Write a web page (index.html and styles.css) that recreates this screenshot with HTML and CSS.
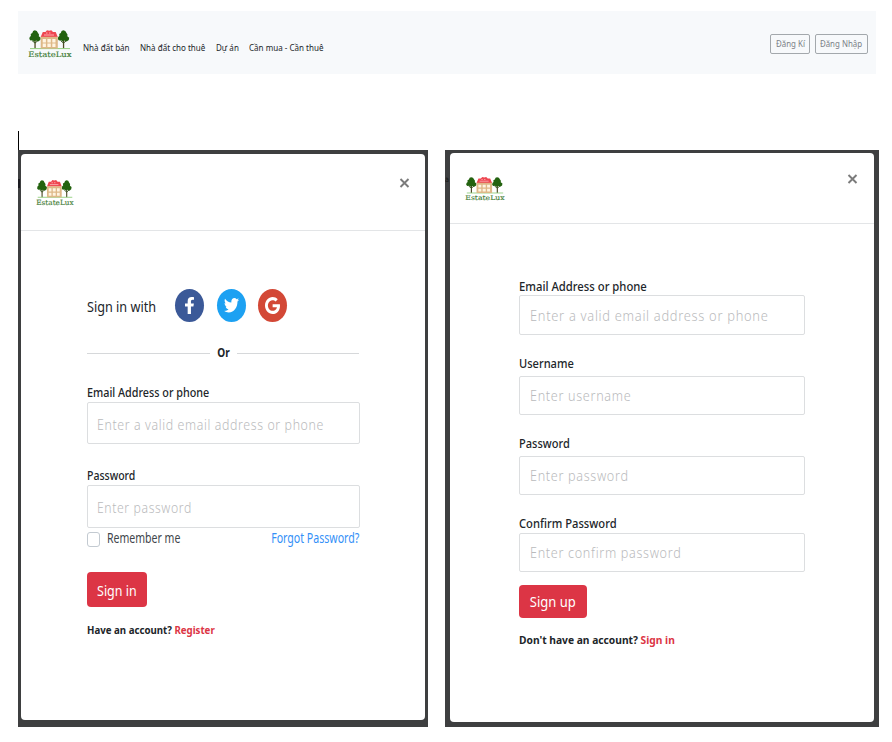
FILE: index.html
```
<!DOCTYPE html>
<html lang="vi">
<head>
<meta charset="utf-8">
<title>EstateLux</title>
<link rel="stylesheet" href="styles.css">
</head>
<body>
<svg width="0" height="0" class="defs" aria-hidden="true">
  <symbol id="tree" viewBox="0 0 12 19">
    <path d="M5.4 10h1.3v8.5H5.4z" fill="#4d4a24"/>
    <path d="M3 10.5l3 2.6 3-2.6" stroke="#33551f" stroke-width="1" fill="none"/>
    <path d="M5.8.3L7.8 1 9 3l1 1.4-.2 1.8 1.9 1.5-.4 2.4-2.1 1.4-2.3-.9-1.6.8-1.8-1.1-2 .2L.3 9.1l.4-2 1.2-1.2-.2-2 1.6-.8.8-2z" fill="#23620f"/>
  </symbol>
  <symbol id="logo" viewBox="0 0 44 30" preserveAspectRatio="none">
    <use href="#tree" x="1" y="1" width="12" height="19"/>
    <use href="#tree" x="29.5" y="1" width="12" height="19"/>
    <path d="M2 19.6h40" stroke="#91cf7e" stroke-width="1"/>
    <path d="M12.7 8l2.1-5h2.6l1.6-1.8 2.2.5 2.1-.5L25 3h2.7l2.1 5z" fill="#ee4650"/>
    <path d="M16 6h10M18 4h1.5m1.5 0h1.5" stroke="#ffc7c8" stroke-width=".8" fill="none"/>
    <path d="M12.7 7.8h17.1v11.8H12.7z" fill="#deb887"/>
    <path d="M14.7 10h3.2v3.4h-3.2zm4.7 0h3.4v3.4h-3.4zm4.9 0h3.2v3.4h-3.2zm-9.6 4.6h3.2V18h-3.2zm4.7 0h3.4V18h-3.4zm4.9 0h3.2V18h-3.2z" fill="#fff4e1"/>
    <text x=".3" y="28" textLength="43.2" lengthAdjust="spacingAndGlyphs" class="logo-text">EstateLux</text>
  </symbol>
</svg>

<header class="navbar">
  <svg class="logo"><use href="#logo"/></svg>
  <nav class="links">
    <a>Nhà đất bán</a><a>Nhà đất cho thuê</a><a>Dự án</a><a>Cần mua - Cần thuê</a>
  </nav>
  <div class="actions">
    <button class="outline reg"><span>Đăng Kí</span></button>
    <button class="outline log"><span>Đăng Nhập</span></button>
  </div>
</header>

<div class="caret"></div>

<main class="panels">
  <section class="backdrop signin">
    <div class="speck"></div>
    <div class="modal">
      <div class="modal-head">
        <svg class="logo"><use href="#logo"/></svg>
        <svg class="close" viewBox="0 0 10 10"><path d="M1 1l8 8M9 1L1 9"/></svg>
      </div>
      <form class="form">
        <div class="social">
          <span class="t lead">Sign in with</span>
          <span class="disc fb"><svg viewBox="22.9 0 274.3 512" preserveAspectRatio="none"><path d="M279.14 288l14.22-92.66h-88.91v-60.13c0-25.35 12.42-50.06 52.24-50.06h40.42V6.26S260.43 0 225.36 0c-73.22 0-121.08 44.38-121.08 124.72v70.62H22.89V288h81.39v224h100.17V288z"/></svg></span>
          <span class="disc tw"><svg viewBox="0 48 512 416" preserveAspectRatio="none"><path d="M459.37 151.716c.325 4.548.325 9.097.325 13.645 0 138.72-105.583 298.558-298.558 298.558-59.452 0-114.68-17.219-161.137-47.106 8.447.974 16.568 1.299 25.34 1.299 49.055 0 94.213-16.568 130.274-44.832-46.132-.975-84.792-31.188-98.112-72.772 6.498.974 12.995 1.624 19.818 1.624 9.421 0 18.843-1.3 27.614-3.573-48.081-9.747-84.143-51.98-84.143-102.985v-1.299c13.969 7.797 30.214 12.67 47.431 13.319-28.264-18.843-46.781-51.005-46.781-87.391 0-19.492 5.197-37.36 14.294-52.954 51.655 63.675 129.3 105.258 216.365 109.807-1.624-7.797-2.599-15.918-2.599-24.04 0-57.828 46.782-104.934 104.934-104.934 30.213 0 57.502 12.67 76.67 33.137 23.715-4.548 46.456-13.32 66.599-25.34-7.798 24.366-24.366 44.833-46.132 57.827 21.117-2.273 41.584-8.122 60.426-16.243-14.292 20.791-32.161 39.308-52.628 54.253z"/></svg></span>
          <span class="disc gg"><svg viewBox="0 8 488 496" preserveAspectRatio="none"><path d="M488 261.8C488 403.3 391.1 504 248 504 110.8 504 0 393.2 0 256S110.8 8 248 8c66.8 0 123 24.5 166.3 64.9l-67.5 64.9C258.5 52.6 94.3 116.6 94.3 256c0 86.5 69.1 156.6 153.7 156.6 98.2 0 135-70.4 140.8-106.9H248v-85.3h236.1c2.3 12.7 3.9 24.9 3.9 41.4z"/></svg></span>
        </div>
        <div class="divider"><span>Or</span></div>
        <label class="t label">Email Address or phone</label>
        <div class="input"><span class="t">Enter a valid email address or phone</span></div>
        <label class="t label second">Password</label>
        <div class="input"><span class="t">Enter password</span></div>
        <div class="options">
          <span class="box"></span><span class="t remember">Remember me</span><a class="t forgot">Forgot Password?</a>
        </div>
        <button type="button" class="submit"><span>Sign in</span></button>
        <p class="t foot">Have an account? <a>Register</a></p>
      </form>
    </div>
  </section>

  <section class="backdrop signup">
    <div class="speck">à</div>
    <div class="modal">
      <div class="modal-head">
        <svg class="logo"><use href="#logo"/></svg>
        <svg class="close" viewBox="0 0 10 10"><path d="M1 1l8 8M9 1L1 9"/></svg>
      </div>
      <form class="form">
        <label class="t label">Email Address or phone</label>
        <div class="input"><span class="t">Enter a valid email address or phone</span></div>
        <label class="t label user">Username</label>
        <div class="input"><span class="t">Enter username</span></div>
        <label class="t label pass">Password</label>
        <div class="input"><span class="t">Enter password</span></div>
        <label class="t label confirm">Confirm Password</label>
        <div class="input"><span class="t">Enter confirm password</span></div>
        <button type="button" class="submit"><span>Sign up</span></button>
        <p class="t foot">Don't have an account? <a>Sign in</a></p>
      </form>
    </div>
  </section>
</main>
</body>
</html>
```
FILE: styles.css
```
* { box-sizing: border-box; }
body {
  margin: 0;
  padding: 11px 0 0 18px;
  width: 892px;
  height: 742px;
  overflow: hidden;
  background: #fff;
  color: #212529;
  font-family: "Noto Sans", "Open Sans", sans-serif;
}
svg { display: block; flex: none; overflow: visible; }
symbol { overflow: visible; }
.defs { position: absolute; }
button { font-family: inherit; padding: 0; margin: 0; }
p { margin: 0; }
.logo-text { font: 400 7.6px "DejaVu Serif", serif; fill: #3f7d36; stroke: #3f7d36; stroke-width: .15; }

.navbar {
  width: 858px;
  height: 63px;
  padding: 18px 8px 0 10px;
  display: flex;
  align-items: flex-start;
  background: #f7f9fb;
}
.navbar .logo { width: 44px; height: 30px; }
.links {
  display: grid;
  grid-template-columns: 57px 76px 33px 90px;
  margin: 11px 0 0 11px;
  font-size: 9px;
  line-height: 15px;
}
.links a { white-space: nowrap; transform: scaleX(.893); transform-origin: 0 50%; }
.actions { display: flex; gap: 5px; margin: 4.5px 0 0 auto; }
.outline {
  height: 20px;
  border: 1px solid #a3a8ac;
  border-radius: 2px;
  background: transparent;
  color: #7b8187;
  font-size: 9px;
  line-height: 17px;
}
.outline span { display: inline-block; white-space: nowrap; transform: scaleX(.88); }
.reg { width: 40px; }
.log { width: 53px; }
.reg span { margin: 0 -3px; }

.caret { width: 1px; height: 19px; margin-top: 57px; background: #000; }

.panels { display: flex; gap: 17px; align-items: flex-start; }
.backdrop { position: relative; height: 577px; background: #3e3f40; overflow: hidden; }
.modal { background: #fff; border-radius: 4px; }
.modal-head { display: flex; justify-content: space-between; border-bottom: 1px solid #e3e5e7; }
.close { width: 11px; height: 10px; }
.close path { stroke: #7b7b7b; stroke-width: 1.9; fill: none; }
.speck { position: absolute; left: 0; color: #151515; }

.form { display: flex; flex-direction: column; align-items: flex-start; }
.t { display: block; white-space: nowrap; transform-origin: 0 50%; }
.label { font-weight: 500; line-height: 16px; height: 16px; }
.input { display: flex; align-items: center; border: 1px solid #dcdee0; border-radius: 2px; flex: none; }
.input .t { color: #b9babc; font-weight: 300; line-height: 20px; }
.submit { border: 0; border-radius: 4px; background: #dc3545; color: #fff; }
.submit span { display: inline-block; }
.foot { font-size: 11px; line-height: 16px; font-weight: 700; }
.foot a { color: #dc3545; }

/* Sign in */
.signin { width: 410px; padding: 4px 3px 0 3px; }
.signin .speck { top: 29px; width: 2px; height: 9px; background: #1b1b20; }
.signin .modal { width: 404px; height: 566px; }
.signin .modal-head { height: 77px; padding: 25px 15px 0 14.5px; }
.signin .logo { width: 38px; height: 28px; }
.signin .close { margin-top: -1px; }
.signin .form { width: 272px; margin-left: 66px; padding-top: 58px; }
.social { display: flex; align-items: center; height: 33px; }
.lead { width: 88px; font-size: 15px; line-height: 20px; transform: scaleX(.843); }
.disc {
  width: 29px;
  height: 33px;
  margin-right: 12.5px;
  border-radius: 50%;
  display: flex;
  align-items: center;
  justify-content: center;
}
.disc svg { fill: #fff; }
.fb { background: #3b5998; }
.fb svg { width: 9px; height: 17px; }
.tw { background: #1da1f2; }
.tw svg { width: 15px; height: 14.5px; }
.gg { background: #d34836; }
.gg svg { width: 15px; height: 17px; }
.divider {
  display: flex;
  align-items: center;
  align-self: stretch;
  height: 16px;
  margin-top: 23px;
  font-size: 12px;
  font-weight: 700;
  line-height: 16px;
}
.divider::before, .divider::after { content: ""; flex: 1; height: 1px; background: #d6d8da; }
.divider span { width: 27px; text-align: center; transform: scaleX(.84); }
.signin .label { font-size: 13px; transform: scaleX(.83); margin-top: 23px; }
.signin .label.second { margin-top: 23px; transform: scaleX(.81); }
.signin .input { width: 273px; height: 42px; margin-top: 2px; padding: 1px 0 0 9px; }
.signin .label.second + .input { height: 43px; padding-top: 0; }
.signin .input .t { font-size: 15px; letter-spacing: .74px; transform: scaleX(.825); }
.signin .second + .input .t { transform: scaleX(.815); }
.options { display: flex; align-items: center; align-self: stretch; height: 20px; font-size: 13.5px; line-height: 20px; }
.box { width: 13px; height: 15px; margin: 2px 6.5px 0 0; border: 1px solid #c3cad1; border-radius: 3px; }
.remember { color: #41464b; transform: scaleX(.78); }
.options .forgot { margin-left: auto; color: #3490f7; transform: scaleX(.785); transform-origin: 100% 50%; }
.signin .submit { width: 60px; height: 35px; margin-top: 24px; font-size: 15px; line-height: 36px; }
.signin .submit span { transform: scaleX(.83); }
.signin .foot { margin-top: 15px; transform: scaleX(.88); }

/* Sign up */
.signup { width: 434px; padding: 3px 5px 0 5px; }
.signup .speck { top: 23px; font-size: 7px; line-height: 14px; }
.signup .modal { width: 424px; height: 569px; position: relative; }
.signup .modal-head { height: 71px; padding: 23px 16px 0 15px; }
.signup .logo { width: 40px; height: 26px; }
.signup .close { margin-top: -2px; }
.signup .form { width: 286px; margin-left: 69px; padding-top: 55px; }
.signup .label { font-size: 12px; transform: scaleX(.94); }
.signup .input { width: 286px; height: 40px; margin-top: 0; padding: 1px 0 0 10px; }
.signup .input .t { font-size: 14px; letter-spacing: .76px; transform: scaleX(.92); }
.signup .user { margin-top: 21px; transform: scaleX(.925); }
.signup .user + .input, .signup .pass + .input { margin-top: 4px; height: 39px; padding-top: 0; }
.signup .user + .input .t, .signup .pass + .input .t, .signup .confirm + .input .t { transform: scaleX(.9); }
.signup .pass { margin-top: 21px; transform: scaleX(.92); }
.signup .confirm { margin-top: 21px; transform: scaleX(.932); }
.signup .confirm + .input { margin-top: 1px; height: 39px; padding-top: 0; }
.signup .submit { width: 68px; height: 33px; margin-top: 13px; font-size: 14px; line-height: 34px; }
.signup .submit span { transform: scaleX(.93); }
.signup .foot { margin-top: 14px; transform: scaleX(.931); }
```
